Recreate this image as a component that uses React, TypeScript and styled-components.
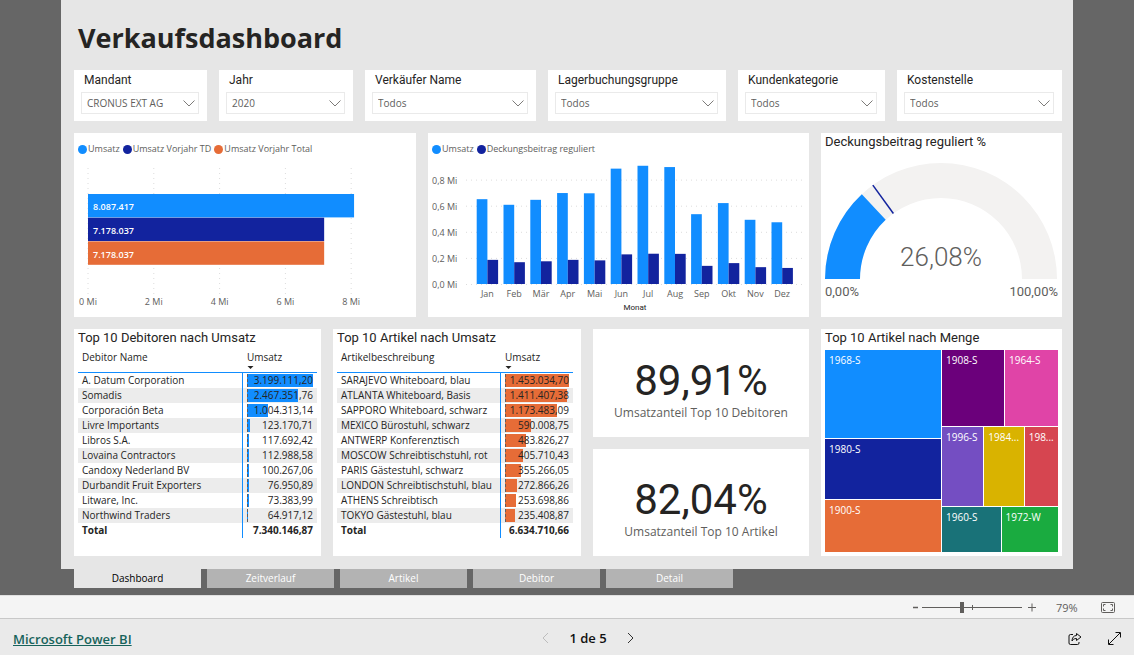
import React from "react";
import styled, { createGlobalStyle } from "styled-components";

const SANS = '"Open Sans", "Noto Sans", sans-serif';
const DIN = 'Roboto, "Liberation Sans", sans-serif';

const color = {
  blue: "#118dff",
  navy: "#12239e",
  orange: "#e66c37",
  ink: "#252423",
  muted: "#605e5c",
  canvas: "#e6e6e6",
  stage: "#666666",
};

const GlobalStyle = createGlobalStyle`
  *, *::before, *::after { box-sizing: border-box; }
  body {
    margin: 0;
    font-family: ${SANS};
    color: ${color.ink};
    background: #eaeaea;
  }
  button, select, input { font: inherit; color: inherit; }
`;

/* ---------- Page shell ---------- */

const Page = styled.div`
  min-height: 100vh;
  display: flex;
  flex-direction: column;
`;

const Stage = styled.main`
  flex: 1;
  padding: 0 61px 6px;
  background: ${color.stage};
`;

const Canvas = styled.div`
  display: flex;
  flex-direction: column;
  gap: 12px;
  padding: 14px 11px 13px 13px;
  background: ${color.canvas};
`;

const Heading = styled.h1`
  margin: 0 4px -4px;
  font-size: 27px;
  line-height: 48px;
  font-weight: 700;
`;

const Row = styled.div<{ $columns: string }>`
  display: grid;
  grid-template-columns: ${(p) => p.$columns};
  gap: 12px;
`;

const Card = styled.section`
  min-width: 0;
  background: #fff;
`;

const CardTitle = styled.h2`
  margin: 0;
  padding: 0 4px;
  font-family: ${DIN};
  font-size: 13px;
  line-height: 18px;
  font-weight: 400;
  white-space: nowrap;
`;

/* ---------- Slicers ---------- */

const SlicerCard = styled(Card)`
  display: flex;
  flex-direction: column;
  gap: 4px;
  padding: 2px 8px 6px 7px;
`;

const SlicerLabel = styled.label`
  padding-left: 3px;
  font-family: ${DIN};
  font-size: 12px;
  line-height: 16px;
`;

const SelectWrap = styled.div`
  position: relative;
  height: 23px;
`;

const Select = styled.select`
  appearance: none;
  display: block;
  width: 100%;
  height: 22px;
  padding: 0 20px 0 5px;
  border: 1px solid #eaeaea;
  border-radius: 0;
  background: #fff;
  font-size: 10px;
  color: ${color.muted};
`;

const SelectArrow = styled.svg`
  position: absolute;
  right: 4px;
  top: 8px;
  pointer-events: none;
`;

/* ---------- Charts ---------- */

const ChartCard = styled(Card)`
  display: flex;
  flex-direction: column;
  padding-top: 9px;
`;

const Legend = styled.ul`
  display: flex;
  gap: 3px;
  margin: 0;
  padding: 0 4px;
  list-style: none;
  font-size: 9px;
  line-height: 14px;
  color: ${color.muted};
  white-space: nowrap;
`;

const LegendItem = styled.li<{ $dot: string }>`
  display: flex;
  align-items: center;
  gap: 1px;
  &::before {
    content: "";
    width: 9px;
    height: 9px;
    border-radius: 50%;
    background: ${(p) => p.$dot};
  }
`;

const Chart = styled.svg`
  display: block;
  width: 100%;
  height: auto;
`;

const AxisText = styled.text`
  font-family: ${SANS};
  font-size: 9px;
  fill: ${color.muted};
`;

const MonthTitle = styled.text`
  font-family: ${DIN};
  font-size: 8px;
  fill: ${color.ink};
`;

const BarText = styled.text`
  font-family: ${SANS};
  font-size: 9px;
  font-weight: 600;
  fill: #fff;
`;

const GaugeText = styled.text`
  font-family: ${DIN};
  font-size: 13px;
  fill: ${color.muted};
`;

const GaugeValue = styled.text`
  font-family: ${DIN};
  font-size: 26px;
  font-weight: 300;
  fill: ${color.muted};
`;

/* ---------- Tables ---------- */

const TableCard = styled(Card)`
  padding-bottom: 18px;
`;

const Table = styled.table<{ $inset: number; $valueWidth: number }>`
  width: calc(100% - ${(p) => p.$inset}px);
  margin: 0 4px;
  border-spacing: 0;
  table-layout: fixed;
  font-size: 10px;
  line-height: 15px;
  white-space: nowrap;

  th, td { padding: 0 4px; text-align: left; font-weight: 400; }
  th:last-child, td:last-child { width: ${(p) => p.$valueWidth}px; }
  td:last-child { text-align: right; border-left: 1px solid ${color.blue}; }
  thead th {
    height: 26px;
    padding-top: 3px;
    vertical-align: top;
    border-bottom: 1px solid ${color.blue};
  }
  thead th:last-child { padding-left: 5px; }
  tbody tr:nth-child(even) { background: #ececec; }
  tfoot th, tfoot td { font-weight: 700; }
`;

const SortMark = styled.svg`
  display: block;
  margin-top: 1px;
`;

const BarCell = styled.div`
  position: relative;
  height: 15px;
`;

const DataBar = styled.span<{ $fill: string }>`
  position: absolute;
  left: 0;
  top: 1px;
  bottom: 1px;
  background: ${(p) => p.$fill};
  border-left: 1px dashed ${color.muted};
`;

const BarValue = styled.span`
  position: relative;
`;

/* ---------- KPI cards ---------- */

const KpiColumn = styled.div`
  display: grid;
  grid-template-rows: 1fr 1fr;
  gap: 12px;
`;

const KpiCard = styled(Card)`
  display: flex;
  flex-direction: column;
  align-items: center;
  justify-content: center;
  padding-top: 14px;
`;

const KpiValue = styled.strong`
  font-family: ${DIN};
  font-size: 42px;
  line-height: 46px;
  font-weight: 400;
`;

const KpiLabel = styled.span`
  font-size: 12px;
  line-height: 18px;
  color: ${color.muted};
`;

/* ---------- Treemap ---------- */

const TreemapCard = styled(Card)`
  display: flex;
  flex-direction: column;
  padding-bottom: 4px;
`;

const Treemap = styled.div`
  flex: 1;
  display: grid;
  grid-template-columns: 1fr 1fr;
  gap: 1px;
  padding: 3px 4px 0;
`;

const TreeStack = styled.div<{ $rows: string }>`
  display: grid;
  grid-template-rows: ${(p) => p.$rows};
  gap: 1px;
  min-width: 0;
`;

const TreeRow = styled.div<{ $columns: string }>`
  display: grid;
  grid-template-columns: ${(p) => p.$columns};
  gap: 1px;
`;

const Tile = styled.div<{ $fill: string }>`
  min-width: 0;
  padding: 2px 4px;
  overflow: hidden;
  background: ${(p) => p.$fill};
  color: #fff;
  font-size: 10px;
  line-height: 16px;
  white-space: nowrap;
`;

/* ---------- Page tabs ---------- */

const Tabs = styled.nav`
  display: flex;
  gap: 6px;
  padding: 0 13px;
`;

const Tab = styled.button<{ $active: boolean }>`
  flex: 0 1 127px;
  height: 19px;
  padding: 0;
  border: 0;
  font-size: 10px;
  line-height: 19px;
  background: ${(p) => (p.$active ? color.canvas : "#b3b3b3")};
  color: ${(p) => (p.$active ? "#000" : "#fff")};
  cursor: pointer;
`;

/* ---------- Zoom bar and footer ---------- */

const ZoomBar = styled.div`
  display: flex;
  align-items: center;
  justify-content: flex-end;
  height: 24px;
  padding-right: 19px;
  background: #f4f4f4;
  border-top: 1px solid #e0e0e0;
  border-bottom: 1px solid #c8c8c8;
  color: ${color.muted};
`;

const IconButton = styled.button`
  display: flex;
  align-items: center;
  justify-content: center;
  padding: 0;
  border: 0;
  background: none;
  cursor: pointer;
`;

const ZoomTrack = styled.div`
  position: relative;
  width: 100px;
  height: 12px;
  margin: 0 6px 0 4px;
  &::after {
    content: "";
    position: absolute;
    left: 50%;
    top: 4px;
    width: 1px;
    height: 5px;
    background: ${color.muted};
  }
`;

const ZoomRange = styled.input`
  appearance: none;
  display: block;
  width: 100%;
  height: 12px;
  margin: 0;
  background: linear-gradient(${color.muted}, ${color.muted}) center / 100% 1px no-repeat;
  &::-webkit-slider-thumb {
    appearance: none;
    width: 4px;
    height: 11px;
    background: ${color.muted};
  }
`;

const ZoomValue = styled.output`
  width: 24px;
  margin: 0 21px 0 20px;
  font-size: 11px;
`;

const Footer = styled.footer`
  display: grid;
  grid-template-columns: 1fr auto 1fr;
  align-items: center;
  height: 36px;
  padding: 0 13px;
  background: #eaeaea;
`;

const BrandLink = styled.a`
  justify-self: start;
  margin-top: 4px;
  font-size: 13px;
  font-weight: 600;
  color: #17635b;
`;

const Pager = styled.div`
  display: flex;
  align-items: center;
  gap: 20px;
  margin: 2px 0 0 42px;
  font-size: 13px;
  font-weight: 600;
  color: #111;
`;

const Actions = styled.div`
  justify-self: end;
  display: flex;
  gap: 26px;
  margin-top: 3px;
`;

/* ---------- Data ---------- */

const slicers = [
  { id: "mandant", label: "Mandant", value: "CRONUS EXT AG" },
  { id: "jahr", label: "Jahr", value: "2020" },
  { id: "verkaeufer", label: "Verkäufer Name", value: "Todos" },
  { id: "lager", label: "Lagerbuchungsgruppe", value: "Todos" },
  { id: "kunden", label: "Kundenkategorie", value: "Todos" },
  { id: "kosten", label: "Kostenstelle", value: "Todos" },
];

const totals = [
  { label: "8.087.417", value: 8.087, fill: color.blue },
  { label: "7.178.037", value: 7.178, fill: color.navy },
  { label: "7.178.037", value: 7.178, fill: color.orange },
];

const months: [string, number, number][] = [
  ["Jan", 0.65, 0.185],
  ["Feb", 0.607, 0.167],
  ["Mär", 0.645, 0.174],
  ["Apr", 0.697, 0.185],
  ["Mai", 0.695, 0.181],
  ["Jun", 0.884, 0.227],
  ["Jul", 0.906, 0.232],
  ["Aug", 0.896, 0.231],
  ["Sep", 0.535, 0.139],
  ["Okt", 0.62, 0.16],
  ["Nov", 0.492, 0.129],
  ["Dez", 0.473, 0.123],
];

type TableRow = [name: string, value: string];

const debitors: TableRow[] = [
  ["A. Datum Corporation", "3.199.111,20"],
  ["Somadis", "2.467.351,76"],
  ["Corporación Beta", "1.004.313,14"],
  ["Livre Importants", "123.170,71"],
  ["Libros S.A.", "117.692,42"],
  ["Lovaina Contractors", "112.988,58"],
  ["Candoxy Nederland BV", "100.267,06"],
  ["Durbandit Fruit Exporters", "76.950,89"],
  ["Litware, Inc.", "73.383,99"],
  ["Northwind Traders", "64.917,12"],
];

const articles: TableRow[] = [
  ["SARAJEVO Whiteboard, blau", "1.453.034,70"],
  ["ATLANTA Whiteboard, Basis", "1.411.407,38"],
  ["SAPPORO Whiteboard, schwarz", "1.173.483,09"],
  ["MEXICO Bürostuhl, schwarz", "590.008,75"],
  ["ANTWERP Konferenztisch", "483.826,27"],
  ["MOSCOW Schreibtischstuhl, rot", "405.710,43"],
  ["PARIS Gästestuhl, schwarz", "355.266,05"],
  ["LONDON Schreibtischstuhl, blau", "272.866,26"],
  ["ATHENS Schreibtisch", "253.698,86"],
  ["TOKYO Gästestuhl, blau", "235.408,87"],
];

const pages = ["Dashboard", "Zeitverlauf", "Artikel", "Debitor", "Detail"];

const toNumber = (text: string) => Number(text.replace(/\./g, "").replace(",", "."));

/* ---------- Components ---------- */

function Slicer({ id, label, value }: { id: string; label: string; value: string }) {
  return (
    <SlicerCard>
      <SlicerLabel htmlFor={id}>{label}</SlicerLabel>
      <SelectWrap>
        <Select id={id} defaultValue={value}>
          <option>{value}</option>
        </Select>
        <SelectArrow width="12" height="7" viewBox="0 0 12 7" fill="none" stroke="#7d7b79">
          <path d="M0.5 0.5 6 6 11.5 0.5" />
        </SelectArrow>
      </SelectWrap>
    </SlicerCard>
  );
}

function TotalsChart() {
  const x0 = 14;
  const perMi = 32.9;
  return (
    <Chart viewBox="0 0 342 160" role="img" aria-label="Umsatz und Vorjahr">
      {[0, 2, 4, 6, 8].map((tick) => (
        <React.Fragment key={tick}>
          <line
            x1={x0 + tick * perMi}
            x2={x0 + tick * perMi}
            y1="12"
            y2="138"
            stroke="#dcdcdc"
            strokeDasharray="1 4"
          />
          <AxisText x={x0 + tick * perMi} y="149" textAnchor="middle">
            {tick} Mi
          </AxisText>
        </React.Fragment>
      ))}
      {totals.map((bar, i) => (
        <React.Fragment key={bar.fill}>
          <rect x={x0} y={38 + i * 23.7} width={bar.value * perMi} height="23.4" fill={bar.fill} />
          <BarText x={x0 + 5} y={54 + i * 24}>
            {bar.label}
          </BarText>
        </React.Fragment>
      ))}
    </Chart>
  );
}

function MonthsChart() {
  const base = 128;
  const perMi = 130.5;
  return (
    <Chart viewBox="0 0 381 161" role="img" aria-label="Umsatz nach Monat">
      {[0, 0.2, 0.4, 0.6, 0.8].map((tick) => (
        <React.Fragment key={tick}>
          <line
            x1="38"
            x2="377"
            y1={base - tick * perMi + 0.5}
            y2={base - tick * perMi + 0.5}
            stroke="#dcdcdc"
            strokeDasharray="1 4"
          />
          <AxisText x="4" y={base - tick * perMi + 4}>
            {tick.toFixed(1).replace(".", ",")} Mi
          </AxisText>
        </React.Fragment>
      ))}
      {months.map(([name, revenue, margin], i) => {
        const x = 48.7 + i * 26.8;
        return (
          <React.Fragment key={name}>
            <rect x={x} y={base - revenue * perMi} width="10.7" height={revenue * perMi} fill={color.blue} />
            <rect x={x + 10.7} y={base - margin * perMi} width="10.7" height={margin * perMi} fill={color.navy} />
            <AxisText x={x + 10.7} y="141" textAnchor="middle">
              {name}
            </AxisText>
          </React.Fragment>
        );
      })}
      <MonthTitle x="207" y="154" textAnchor="middle">
        Monat
      </MonthTitle>
    </Chart>
  );
}

function Gauge() {
  const cx = 120;
  const cy = 128;
  const outer = 116;
  const inner = 81;
  const point = (share: number, r: number) => {
    const a = Math.PI * (1 - share);
    return `${cx + r * Math.cos(a)} ${cy - r * Math.sin(a)}`;
  };
  const arc = (from: number, to: number) =>
    `M${point(from, outer)} A${outer} ${outer} 0 0 1 ${point(to, outer)} ` +
    `L${point(to, inner)} A${inner} ${inner} 0 0 0 ${point(from, inner)}Z`;
  return (
    <Chart viewBox="0 0 241 160" role="img" aria-label="Deckungsbeitrag reguliert 26,08%">
      <path d={arc(0, 1)} fill="#f3f2f1" />
      <path d={arc(0, 0.2608)} fill={color.blue} />
      <path d={`M${point(0.3, outer)} L${point(0.3, inner)}`} stroke={color.navy} strokeWidth="1.5" />
      <GaugeValue x={cx} y="115" textAnchor="middle">
        26,08%
      </GaugeValue>
      <GaugeText x="4" y="145">
        0,00%
      </GaugeText>
      <GaugeText x="237" y="145" textAnchor="end">
        100,00%
      </GaugeText>
    </Chart>
  );
}

function RankTable(props: {
  title: string;
  nameHeader: string;
  rows: TableRow[];
  total: string;
  fill: string;
  inset: number;
  valueWidth: number;
}) {
  const max = toNumber(props.rows[0][1]);
  return (
    <TableCard>
      <CardTitle>{props.title}</CardTitle>
      <Table $inset={props.inset} $valueWidth={props.valueWidth}>
        <thead>
          <tr>
            <th scope="col">{props.nameHeader}</th>
            <th scope="col">
              Umsatz
              <SortMark width="7" height="4" viewBox="0 0 7 4">
                <path d="M0.5 0h6L3.5 3z" fill={color.ink} />
              </SortMark>
            </th>
          </tr>
        </thead>
        <tbody>
          {props.rows.map(([name, value]) => (
            <tr key={name}>
              <td>{name}</td>
              <td>
                <BarCell>
                  <DataBar $fill={props.fill} style={{ width: `${(toNumber(value) / max) * 100}%` }} />
                  <BarValue>{value}</BarValue>
                </BarCell>
              </td>
            </tr>
          ))}
        </tbody>
        <tfoot>
          <tr>
            <th scope="row">Total</th>
            <td>{props.total}</td>
          </tr>
        </tfoot>
      </Table>
    </TableCard>
  );
}

function Kpi({ value, label }: { value: string; label: string }) {
  return (
    <KpiCard>
      <KpiValue>{value}</KpiValue>
      <KpiLabel>{label}</KpiLabel>
    </KpiCard>
  );
}

export default function App() {
  return (
    <Page>
      <GlobalStyle />
      <Stage>
        <Canvas>
          <Heading>Verkaufsdashboard</Heading>

          <Row $columns="133fr 134fr 171fr 178fr 147fr 165fr">
            {slicers.map((s) => (
              <Slicer key={s.id} {...s} />
            ))}
          </Row>

          <Row $columns="342fr 381fr 241fr">
            <ChartCard>
              <Legend>
                <LegendItem $dot={color.blue}>Umsatz</LegendItem>
                <LegendItem $dot={color.navy}>Umsatz Vorjahr TD</LegendItem>
                <LegendItem $dot={color.orange}>Umsatz Vorjahr Total</LegendItem>
              </Legend>
              <TotalsChart />
            </ChartCard>
            <ChartCard>
              <Legend>
                <LegendItem $dot={color.blue}>Umsatz</LegendItem>
                <LegendItem $dot={color.navy}>Deckungsbeitrag reguliert</LegendItem>
              </Legend>
              <MonthsChart />
            </ChartCard>
            <Card>
              <CardTitle>Deckungsbeitrag reguliert %</CardTitle>
              <Gauge />
            </Card>
          </Row>

          <Row $columns="247fr 248fr 216fr 241fr">
            <RankTable
              title="Top 10 Debitoren nach Umsatz"
              nameHeader="Debitor Name"
              rows={debitors}
              total="7.340.146,87"
              fill={color.blue}
              inset={8}
              valueWidth={75}
            />
            <RankTable
              title="Top 10 Artikel nach Umsatz"
              nameHeader="Artikelbeschreibung"
              rows={articles}
              total="6.634.710,66"
              fill={color.orange}
              inset={12}
              valueWidth={73}
            />
            <KpiColumn>
              <Kpi value="89,91%" label="Umsatzanteil Top 10 Debitoren" />
              <Kpi value="82,04%" label="Umsatzanteil Top 10 Artikel" />
            </KpiColumn>
            <TreemapCard>
              <CardTitle>Top 10 Artikel nach Menge</CardTitle>
              <Treemap>
                <TreeStack $rows="88fr 60fr 52fr">
                  <Tile $fill={color.blue}>1968-S</Tile>
                  <Tile $fill={color.navy}>1980-S</Tile>
                  <Tile $fill={color.orange}>1900-S</Tile>
                </TreeStack>
                <TreeStack $rows="76fr 79fr 45fr">
                  <TreeRow $columns="62fr 53fr">
                    <Tile $fill="#6b007b">1908-S</Tile>
                    <Tile $fill="#e044a7">1964-S</Tile>
                  </TreeRow>
                  <TreeRow $columns="41fr 39fr 33fr">
                    <Tile $fill="#744ec2">1996-S</Tile>
                    <Tile $fill="#d9b300">1984...</Tile>
                    <Tile $fill="#d64550">198...</Tile>
                  </TreeRow>
                  <TreeRow $columns="58fr 56fr">
                    <Tile $fill="#197278">1960-S</Tile>
                    <Tile $fill="#1aab40">1972-W</Tile>
                  </TreeRow>
                </TreeStack>
              </Treemap>
            </TreemapCard>
          </Row>
        </Canvas>

        <Tabs>
          {pages.map((page, i) => (
            <Tab key={page} type="button" $active={i === 0}>
              {page}
            </Tab>
          ))}
        </Tabs>
      </Stage>

      <ZoomBar>
        <IconButton type="button" aria-label="Verkleinern">
          <svg width="5" height="9" viewBox="0 0 5 9" stroke={color.muted} strokeWidth="1.5">
            <path d="M0 4.5h5" />
          </svg>
        </IconButton>
        <ZoomTrack>
          <ZoomRange type="range" min={0} max={200} defaultValue={79} aria-label="Zoom" />
        </ZoomTrack>
        <IconButton type="button" aria-label="Vergrößern">
          <svg width="8" height="9" viewBox="0 0 8 9" stroke={color.muted}>
            <path d="M0 4.5h8M4 0.5v8" />
          </svg>
        </IconButton>
        <ZoomValue>79%</ZoomValue>
        <IconButton type="button" aria-label="An Seite anpassen">
          <svg width="14" height="11" viewBox="0 0 14 11" fill="none" stroke={color.muted}>
            <rect x="0.5" y="0.5" width="13" height="10" rx="1" />
            <path d="M2.5 4.5v-2h2M9.5 2.5h2v2M11.5 6.5v2h-2M4.5 8.5h-2v-2" />
          </svg>
        </IconButton>
      </ZoomBar>

      <Footer>
        <BrandLink href="#">Microsoft Power BI</BrandLink>
        <Pager>
          <IconButton type="button" aria-label="Vorherige Seite" disabled>
            <svg width="7" height="12" viewBox="0 0 7 12" fill="none" stroke="#bdbdbd">
              <path d="M6 1 1 6l5 5" />
            </svg>
          </IconButton>
          <span>1 de 5</span>
          <IconButton type="button" aria-label="Nächste Seite">
            <svg width="7" height="12" viewBox="0 0 7 12" fill="none" stroke="#333">
              <path d="M1 1 6 6l-5 5" />
            </svg>
          </IconButton>
        </Pager>
        <Actions>
          <IconButton type="button" aria-label="Freigeben">
            <svg width="14" height="14" viewBox="0 0 14 14" fill="none" stroke="#111" strokeLinejoin="round">
              <path d="M5 2.5H2.5a1.5 1.5 0 0 0-1.5 1.5v7A1.5 1.5 0 0 0 2.5 12.5h7A1.5 1.5 0 0 0 11 11v-1" />
              <path d="M8.500 1.500 13 5 8.500 8.500V6.500C6 6.500 5 7.500 4 9c0-3 1.500-5.500 4.500-5.500z" />
            </svg>
          </IconButton>
          <IconButton type="button" aria-label="Vollbild">
            <svg width="13" height="13" viewBox="0 0 13 13" fill="none" stroke="#111">
              <path d="M1 12 12 1M7.500 0.500h5v5M0.500 7.500v5h5" />
            </svg>
          </IconButton>
        </Actions>
      </Footer>
    </Page>
  );
}
